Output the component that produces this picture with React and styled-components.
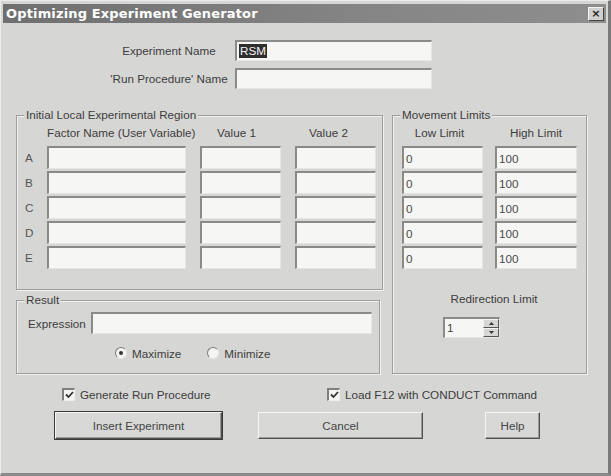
import React from "react";
import styled, { createGlobalStyle } from "styled-components";

const GlobalStyle = createGlobalStyle`
  html, body {
    margin: 0;
    padding: 0;
    background: #d6d6d4;
  }
`;

const BG = "#d6d6d4";
const INK = "#3d3d3d";

//Window chrome
const Win = styled.div`
  width: 611px;
  height: 476px;
  box-sizing: border-box;
  background: ${BG};
  border-left: 1px solid #ececea;
  border-top: 1px solid #ececea;
  border-right: 3px solid #7a7a7a;
  border-bottom: 3px solid #8a8a8a;
  padding: 3px 2px 0 2px;
  font-family: "Liberation Sans", Arial, sans-serif;
  font-size: 11.7px;
  color: ${INK};
  display: flex;
  flex-direction: column;
`;

const TitleBar = styled.div`
  height: 19px;
  background: linear-gradient(90deg, #6f6f6f, #858585 60%, #8e8e8e);
  display: flex;
  align-items: center;
  justify-content: space-between;
  padding: 0 2px 0 3px;
  color: #fff;
  font-family: "DejaVu Sans", Verdana, sans-serif;
  font-weight: bold;
  font-size: 13px;
  letter-spacing: 0.15px;
`;

const CloseBtn = styled.div`
  width: 14px;
  height: 12px;
  background: #d0d0ce;
  border: 1px solid;
  border-color: #f4f4f4 #444 #444 #f4f4f4;
  color: #222;
  font-family: "DejaVu Sans", sans-serif;
  font-size: 11px;
  line-height: 12px;
  text-align: center;
  font-weight: bold;
`;

const Body = styled.div`
  padding: 0 0 0 13px;
  display: flex;
  flex-direction: column;
  white-space: nowrap;
`;

//Text fields
const Field = styled.div`
  box-sizing: border-box;
  height: ${(p) => p.$h || 23}px;
  width: ${(p) => (p.$w ? `${p.$w}px` : "auto")};
  flex: ${(p) => (p.$grow ? 1 : "none")};
  background: #f6f6f4;
  border-top: 2px solid #8a8a88;
  border-left: 2px solid #8a8a88;
  border-right: 1px solid #e6e6e4;
  border-bottom: 1px solid #e6e6e4;
  padding: 0 2px;
  display: flex;
  align-items: center;
  color: #4a4a4a;
`;

const Selected = styled.span`
  background: #2e2e2e;
  color: #f4f4f4;
  padding: 0 1px;
  line-height: 14px;
`;

const NameGrid = styled.div`
  margin: 17px 0 0 87px;
  display: grid;
  grid-template-columns: 132px 197px;
  row-gap: 7px;
  align-items: center;
`;

const NameLabel = styled.div`
  text-align: center;
`;

//Groups
const Middle = styled.div`
  margin-top: 26px;
  display: flex;
  gap: 9px;
`;

const LeftCol = styled.div`
  width: 367px;
  display: flex;
  flex-direction: column;
  gap: 10px;
`;

const Group = styled.div`
  position: relative;
  box-sizing: border-box;
  border: 1px solid #9e9e9c;
  box-shadow: inset 1px 1px 0 #f2f2f0, 1px 1px 0 #f2f2f0;
  padding: ${(p) => p.$pad};
  width: ${(p) => (p.$w ? `${p.$w}px` : "auto")};
`;

const Legend = styled.span`
  position: absolute;
  top: -8px;
  left: 7px;
  padding: 0 2px;
  background: ${BG};
  line-height: 14px;
`;

const Table = styled.div`
  display: grid;
  grid-template-columns: ${(p) => p.$cols};
  column-gap: ${(p) => p.$gap}px;
  row-gap: 2px;
  align-items: center;
`;

const Header = styled.div`
  text-align: center;
  line-height: 14px;
  margin-bottom: 4px;
  padding-right: ${(p) => p.$shift || 0}px;
`;

const RowLabel = styled.div`
  padding-left: 3px;
  color: #555;
`;

const ExprRow = styled.div`
  display: flex;
  align-items: center;
  gap: 5px;
`;

const RadioRow = styled.div`
  margin: 12px 0 0 87px;
  display: flex;
  align-items: center;
  height: 14px;
`;

const RadioItem = styled.label`
  display: flex;
  align-items: center;
  gap: 5px;
  margin-right: 26px;
`;

const RadioDot = styled.span`
  width: 12px;
  height: 12px;
  box-sizing: border-box;
  border-radius: 50%;
  border: 1px solid;
  border-color: #7a7a7a #e8e8e8 #e8e8e8 #7a7a7a;
  background: #f4f4f2;
  display: flex;
  align-items: center;
  justify-content: center;
  &::after {
    content: "";
    width: 4px;
    height: 4px;
    border-radius: 50%;
    background: ${(p) => (p.$on ? "#333" : "transparent")};
  }
`;

const Redirect = styled.div`
  margin-top: 23px;
  text-align: center;
  line-height: 14px;
`;

const Spin = styled.div`
  margin: 11px 0 0 41px;
  width: 57px;
  height: 21px;
  box-sizing: border-box;
  display: flex;
  background: #f6f6f4;
  border-top: 2px solid #8a8a88;
  border-left: 2px solid #8a8a88;
  border-right: 1px solid #e6e6e4;
  border-bottom: 1px solid #e6e6e4;
`;

const SpinValue = styled.div`
  flex: 1;
  padding-left: 2px;
  line-height: 18px;
`;

const SpinButtons = styled.div`
  width: 16px;
  display: flex;
  flex-direction: column;
`;

const SpinBtn = styled.div`
  flex: 1;
  background: #d6d6d4;
  border: 1px solid;
  border-color: #f2f2f0 #555 #555 #f2f2f0;
  display: flex;
  align-items: center;
  justify-content: center;
`;

//Checkboxes and buttons
const CheckRow = styled.div`
  margin: 13px 0 0 46px;
  display: flex;
  align-items: center;
  height: 14px;
`;

const CheckItem = styled.label`
  display: flex;
  align-items: center;
  gap: 5px;
  width: ${(p) => (p.$w ? `${p.$w}px` : "auto")};
`;

const Box = styled.span`
  width: 13px;
  height: 13px;
  box-sizing: border-box;
  border-top: 2px solid #7f7f7f;
  border-left: 2px solid #7f7f7f;
  border-right: 1px solid #eeeeec;
  border-bottom: 1px solid #eeeeec;
  background: #f4f4f2;
  display: flex;
  align-items: center;
  justify-content: center;
`;

const ButtonRow = styled.div`
  margin: 11px 0 0 39px;
  display: flex;
`;

const Button = styled.div`
  box-sizing: border-box;
  width: ${(p) => p.$w}px;
  height: 27px;
  margin-left: ${(p) => p.$ml || 0}px;
  background: #d8d8d6;
  border: 1px solid;
  border-color: #f6f6f4 #505050 #505050 #f6f6f4;
  box-shadow: ${(p) =>
    p.$default
      ? "0 0 0 1px #3a3a3a, inset -1px -1px 0 #9a9a98"
      : "inset -1px -1px 0 #9a9a98"};
  display: flex;
  align-items: center;
  justify-content: center;
  color: #444;
`;

const factors = ["A", "B", "C", "D", "E"];

const Check = () => (
  <svg width="9" height="8" viewBox="0 0 9 8">
    <path d="M1 3.5 L3.5 6 L8 1" stroke="#333" strokeWidth="1.8" fill="none" />
  </svg>
);

const Arrow = ({ up }) => (
  <svg width="5" height="3" viewBox="0 0 5 3">
    <path d={up ? "M0 3 L2.5 0 L5 3 Z" : "M0 0 L2.5 3 L5 0 Z"} fill="#333" />
  </svg>
);

const App = () => {
  return (
    <>
      <GlobalStyle />
      <Win>
        <TitleBar>
          <span>Optimizing Experiment Generator</span>
          <CloseBtn>×</CloseBtn>
        </TitleBar>
        <Body>
          <NameGrid>
            <NameLabel>Experiment Name</NameLabel>
            <Field $h={21}>
              <Selected>RSM</Selected>
            </Field>
            <NameLabel>'Run Procedure' Name</NameLabel>
            <Field $h={21} />
          </NameGrid>

          <Middle>
            <LeftCol>
              <Group $pad="10px 0 20px 5px">
                <Legend>Initial Local Experimental Region</Legend>
                <Table $cols="11px 139px 81px 81px" $gap={14}>
                  <div />
                  <Header $shift={8}>Factor Name (User Variable)</Header>
                  <Header $shift={8}>Value 1</Header>
                  <Header $shift={14}>Value 2</Header>
                  {factors.map((f) => (
                    <React.Fragment key={f}>
                      <RowLabel>{f}</RowLabel>
                      <Field />
                      <Field />
                      <Field />
                    </React.Fragment>
                  ))}
                </Table>
              </Group>
              <Group $pad="11px 7px 13px 11px" $w={364}>
                <Legend>Result</Legend>
                <ExprRow>
                  <span>Expression</span>
                  <Field $h={22} $grow />
                </ExprRow>
                <RadioRow>
                  <RadioItem>
                    <RadioDot $on />
                    Maximize
                  </RadioItem>
                  <RadioItem>
                    <RadioDot />
                    Minimize
                  </RadioItem>
                </RadioRow>
              </Group>
            </LeftCol>

            <Group $pad="10px 0 0 9px" $w={195}>
              <Legend>Movement Limits</Legend>
              <Table $cols="81px 82px" $gap={12}>
                <Header $shift={6}>Low Limit</Header>
                <Header>High Limit</Header>
                {factors.map((f) => (
                  <React.Fragment key={f}>
                    <Field>0</Field>
                    <Field>100</Field>
                  </React.Fragment>
                ))}
              </Table>
              <Redirect>Redirection Limit</Redirect>
              <Spin>
                <SpinValue>1</SpinValue>
                <SpinButtons>
                  <SpinBtn>
                    <Arrow up />
                  </SpinBtn>
                  <SpinBtn>
                    <Arrow />
                  </SpinBtn>
                </SpinButtons>
              </Spin>
            </Group>
          </Middle>

          <CheckRow>
            <CheckItem $w={265}>
              <Box>
                <Check />
              </Box>
              Generate Run Procedure
            </CheckItem>
            <CheckItem>
              <Box>
                <Check />
              </Box>
              Load F12 with CONDUCT Command
            </CheckItem>
          </CheckRow>

          <ButtonRow>
            <Button $w={167} $default>
              Insert Experiment
            </Button>
            <Button $w={165} $ml={36}>
              Cancel
            </Button>
            <Button $w={55} $ml={62}>
              Help
            </Button>
          </ButtonRow>
        </Body>
      </Win>
    </>
  );
};

export default App;
